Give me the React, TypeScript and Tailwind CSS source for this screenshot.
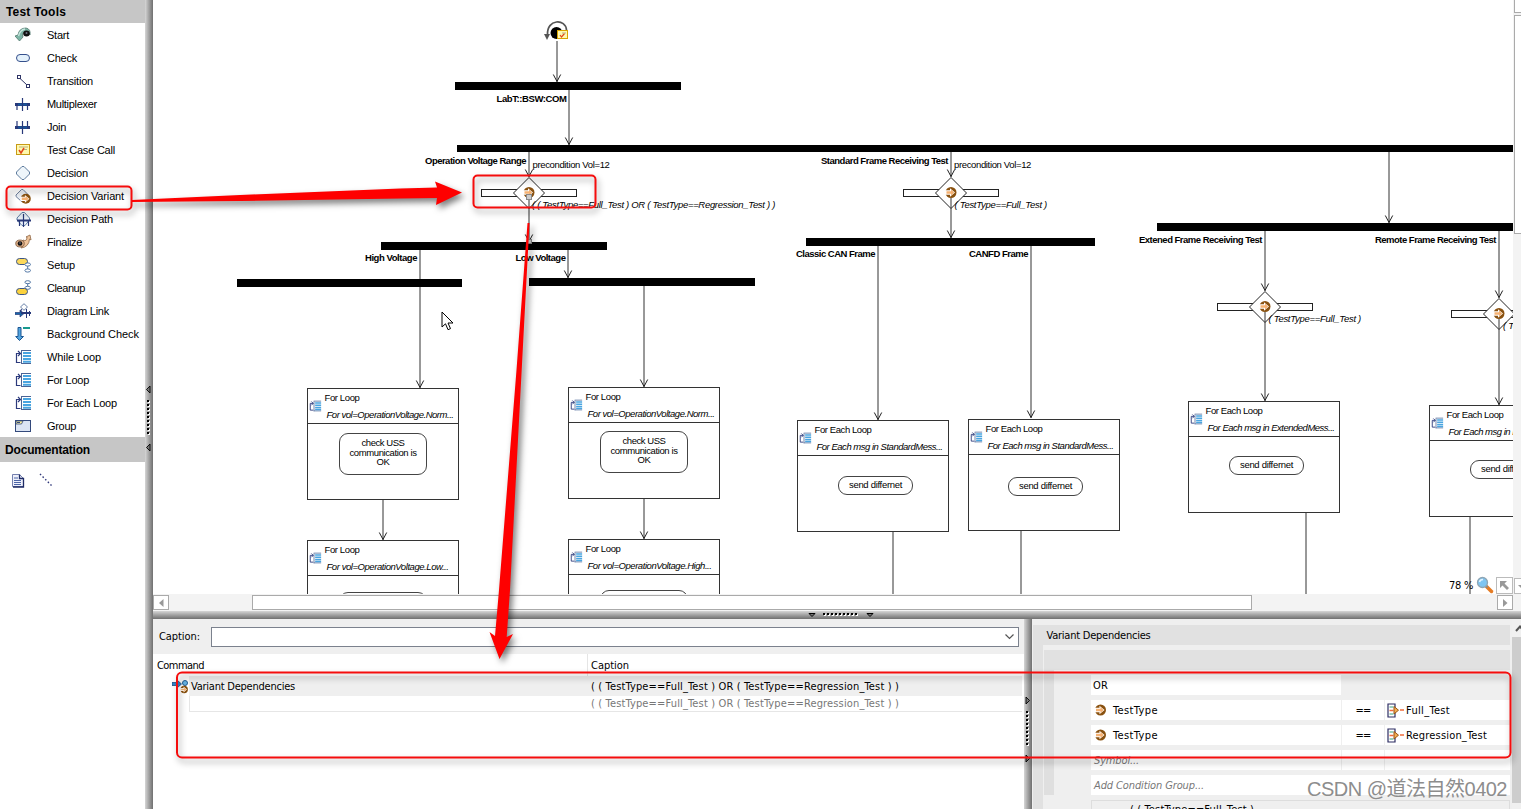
import { useLayoutEffect, useRef, useState } from "react";
import type { ReactNode } from "react";

/* Text whose letter spacing is adjusted so that it fills a given width. */
function Fit({ w, className = "", children }: { w: number; className?: string; children: string }) {
  const ref = useRef<HTMLSpanElement>(null);
  const [spacing, setSpacing] = useState<number | null>(null);
  useLayoutEffect(() => {
    const el = ref.current;
    if (!el || spacing !== null) return;
    const natural = el.getBoundingClientRect().width;
    setSpacing((w - natural) / children.length);
  }, [w, children, spacing]);
  return (
    <span
      ref={ref}
      className={`inline-block whitespace-pre ${className}`}
      style={{ letterSpacing: spacing === null ? "0px" : `${spacing}px` }}
    >
      {children}
    </span>
  );
}

const UI = "font-['DejaVu_Sans_Condensed','Noto_Sans',sans-serif] text-[11px] text-black [&_span]:pt-[2px]";

function Icon({ children }: { children: ReactNode }) {
  return (
    <svg width="17" height="16" viewBox="0 0 17 16" className="shrink-0">
      {children}
    </svg>
  );
}

/* Brown disc with a pale arrow, used for every variant symbol. */
function VariantMark({ cx, cy, r = 5.5 }: { cx: number; cy: number; r?: number }) {
  const k = r / 5.5;
  return (
    <g transform={`translate(${cx} ${cy}) scale(${k})`}>
      <circle r="5.5" fill="#8a5210" />
      <path d="M-6 -2.300H-1V-4.300L4 0L-1 4.300V2.300H-6Z" fill="#fff" />
      <path d="M-4.500 -1.300H0V-3L3.200 0L0 3V1.300H-4.500Z" fill="#f6b273" />
    </g>
  );
}

function LoopGlyph() {
  return (
    <g>
      <path d="M5.500 4.500H1.500V13.500H5.500M3 2L5.500 4.500L3 7" fill="none" stroke="#2c3a7c" strokeWidth="1.200" />
      <path d="M6.500 2V15M6 1.500H16M6 14.500H16" fill="none" stroke="#4a6496" />
      <path d="M8 4H16M8 7H16M8 10H16M8 12.700H16" stroke="#4aa5e0" strokeWidth="2" />
    </g>
  );
}

const glyphs: Record<string, ReactNode> = {
  Start: (
    <g>
      <path d="M0 9L3 8Q4 1 11 1Q16 2 15 8L13 5Q10 3 8 6Q7 8 8 10L4.500 14Z" fill="#7db5a6" stroke="#53786f" strokeWidth=".8" />
      <path d="M3.500 9Q5 3 10 2" fill="none" stroke="#c9e8df" strokeWidth="1.300" />
      <ellipse cx="11.500" cy="6.500" rx="3.300" ry="3" fill="#111" />
      <circle cx="11.500" cy="6" r="1" fill="#778" />
    </g>
  ),
  Check: <rect x="1.500" y="4.500" width="13" height="7" rx="3.500" fill="#e4f1fb" stroke="#35508c" />,
  Transition: (
    <g fill="#fff" stroke="#2f3566">
      <path d="M4 4.500L12 12" />
      <rect x="2.500" y="2.500" width="3" height="3" />
      <rect x="11.500" y="11.500" width="3" height="3" />
    </g>
  ),
  Multiplexer: (
    <g stroke="#28397a" fill="none">
      <path d="M0 8.500H15" strokeWidth="3" />
      <path d="M3 8.500H12" strokeWidth="2" stroke="#17559a" />
      <path d="M7.500 2V15M2 8V14M12.500 8V14" strokeWidth="1.200" />
    </g>
  ),
  Join: (
    <g stroke="#28397a" fill="none">
      <path d="M0 8.500H15" strokeWidth="3" />
      <path d="M3 8.500H12" strokeWidth="2" stroke="#17559a" />
      <path d="M7.500 2V15M2 2V8M12.500 2V8" strokeWidth="1.200" />
    </g>
  ),
  "Test Case Call": (
    <g>
      <rect x="1.500" y="2.500" width="13" height="10" fill="#fff9ae" stroke="#c79b16" />
      <path d="M4 5H13M8 7.500H12" stroke="#b9b184" />
      <path d="M4 8L6 11L9 6" fill="none" stroke="#e2461b" strokeWidth="1.500" />
    </g>
  ),
  Decision: <path d="M7 1.500H9L14.500 7V9L9 14.500H7L1.500 9V7Z" fill="#eef5fa" stroke="#5d7a9c" />,
  "Decision Variant": (
    <g>
      <path d="M6.500 1.500H8L13.500 7V9L8 13.500H6.500L1 8.500V7Z" fill="#e9eef4" stroke="#6d7f9c" />
      <VariantMark cx={10.8} cy={10.8} r={5} />
    </g>
  ),
  "Decision Path": (
    <g fill="none">
      <path d="M7 1.500H9.500L14.500 7V9L10 14.500H7L2 9V7Z" fill="#edf4fb" stroke="#5c7fa8" />
      <path d="M2 9.500H16" stroke="#28397a" strokeWidth="2" />
      <path d="M8.500 3V16M4.500 9V15M13.500 9V15" stroke="#28397a" strokeWidth="1.200" />
    </g>
  ),
  Finalize: (
    <g>
      <path d="M8 6Q12 8 12 3L11 3L15 1L16 6L14.500 5Q14 13 6 14Q8 11 8 6Z" fill="#f0c49b" stroke="#9a7351" strokeWidth=".9" />
      <ellipse cx="5" cy="9.500" rx="4.300" ry="3.500" fill="#d8a982" stroke="#705036" strokeWidth=".7" />
      <circle cx="5" cy="9.500" r="2.300" fill="#111" />
      <circle cx="5" cy="9" r=".7" fill="#99a" />
    </g>
  ),
  Setup: (
    <g>
      <rect x="1.500" y="1.500" width="11" height="6" rx="3" fill="#fbd85a" stroke="#3c5586" />
      <ellipse cx="12.700" cy="7.500" rx="2.800" ry="1.600" fill="#fff" stroke="#5277a5" />
      <path d="M12.700 9V12" stroke="#5277a5" />
      <ellipse cx="12.700" cy="13.500" rx="2.800" ry="1.600" fill="#fff" stroke="#5277a5" />
    </g>
  ),
  Cleanup: (
    <g>
      <ellipse cx="12.700" cy="2.200" rx="2.800" ry="1.500" fill="#fff" stroke="#5277a5" />
      <path d="M12.700 3.500V6.500" stroke="#5277a5" />
      <ellipse cx="12.700" cy="7.800" rx="2.800" ry="1.500" fill="#fff" stroke="#5277a5" />
      <rect x="1.500" y="8.500" width="11" height="6" rx="3" fill="#fbd23d" stroke="#3c5586" />
    </g>
  ),
  "Diagram Link": (
    <g fill="none">
      <path d="M9 .7L12.500 4L9 7.300L5.500 4Z" fill="#fff" stroke="#6a82a8" />
      <path d="M0 9.500H5V7L9 10.500L5 14V11.500H0Z" fill="#1767a8" stroke="#28397a" strokeWidth=".7" />
      <path d="M6 10H16" stroke="#28397a" strokeWidth="2" />
      <path d="M6.500 6L5.500 9M11.500 6V15M14.500 8V13" stroke="#28397a" />
    </g>
  ),
  "Background Check": (
    <g>
      <path d="M3 1.500H6V10.500H8.500L4.500 14.500L.7 10.500H3Z" fill="#55a6df" stroke="#1a5592" />
      <path d="M8 2H15" stroke="#18998e" strokeWidth="2" />
    </g>
  ),
  "While Loop": <LoopGlyph />,
  "For Loop": <LoopGlyph />,
  "For Each Loop": <LoopGlyph />,
  Group: (
    <g>
      <rect x=".5" y="2.500" width="15" height="11" fill="#dce5f4" stroke="#33497b" />
      <path d="M1 3H8L6.500 6H1Z" fill="#fff29c" stroke="#33497b" strokeWidth=".8" />
      <path d="M2 4.500H5" stroke="#33497b" />
    </g>
  ),
};

const tools: [string, number][] = [
  ["Start", 22], ["Check", 30], ["Transition", 46], ["Multiplexer", 50], ["Join", 19],
  ["Test Case Call", 68], ["Decision", 41], ["Decision Variant", 77], ["Decision Path", 66],
  ["Finalize", 35], ["Setup", 28], ["Cleanup", 38], ["Diagram Link", 62],
  ["Background Check", 92], ["While Loop", 54], ["For Loop", 42], ["For Each Loop", 70], ["Group", 29],
];

function Sidebar() {
  return (
    <aside className="flex w-[145px] shrink-0 flex-col bg-white font-['Liberation_Sans',Arial,sans-serif] text-[11px] text-black">
      <div className="flex h-[23px] items-center bg-[#c6c6c6] pl-[6px] text-[12px] font-bold">
        <Fit w={60}>Test Tools</Fit>
      </div>
      {tools.map(([name, w]) => (
        <div key={name} className="flex h-[23px] items-center pl-[15px]">
          <Icon>{glyphs[name]}</Icon>
          <Fit w={w} className="ml-[15px] pt-[2px]">{name}</Fit>
        </div>
      ))}
      <div className="flex h-[25px] items-center bg-[#c6c6c6] pl-[5px] text-[12px] font-bold">
        <Fit w={85}>Documentation</Fit>
      </div>
      <div className="flex items-start gap-[11px] pt-[11px] pl-[11px]">
        <svg width="16" height="16">
          <path d="M1.500 1.500H8.500L12.500 5.500V13.500H1.500Z" fill="#eef0fb" stroke="#7480ae" />
          <path d="M8.500 1.500V5.500H12.500V14H2" fill="none" stroke="#1e2b66" strokeWidth="1.300" />
          <path d="M3 5H7M3 7.500H10M3 9.500H10M3 11.500H10" stroke="#4d66a8" />
        </svg>
        <svg width="18" height="16">
          <path d="M2 1L15 14" stroke="#30387a" strokeWidth="1.400" strokeDasharray="1.5 2.200" />
        </svg>
      </div>
    </aside>
  );
}

/* Grip of a splitter: nine dots between two small triangles. */
function Grip({ dir }: { dir: "left" | "right" | "down" }) {
  const tri =
    dir === "left" ? "M5 1L1.500 4.500L5 8Z" : dir === "right" ? "M2 1L5.500 4.500L2 8Z" : "M2 2.500H8L5 5.500Z";
  const dots = Array.from({ length: 9 }, (_, i) => i);
  if (dir === "down") {
    return (
      <svg width="68" height="8" className="block">
        <path d={tri} fill="#777" stroke="#000" />
        {dots.map((i) => (
          <g key={i}>
            <rect x={17 + i * 4} y="3" width="2" height="2" fill="#fff" />
            <rect x={16 + i * 4} y="2" width="2" height="2" fill="#000" />
          </g>
        ))}
        <path d={tri} transform="translate(58 0)" fill="#777" stroke="#000" />
      </svg>
    );
  }
  return (
    <svg width="8" height="67" className="block">
      <path d={tri} fill="#777" stroke="#000" strokeWidth=".9" />
      {dots.map((i) => (
        <g key={i}>
          <rect x="3" y={16 + i * 4} width="2" height="2" fill="#fff" />
          <rect x="2" y={15 + i * 4} width="2" height="2" fill="#000" />
        </g>
      ))}
      <path d={tri} transform="translate(0 58)" fill="#777" stroke="#000" strokeWidth=".9" />
    </svg>
  );
}

/* ---------- diagram ---------- */

const bars = [
  [455, 82, 226, 8], [457, 145, 1060, 7], [381, 242, 226, 8], [237, 279, 225, 8],
  [529, 278, 226, 8], [806, 238, 289, 8], [1157, 223, 360, 8],
];

/* x, start y, end y, ends in an arrow head */
const links: [number, number, number, boolean][] = [
  [557, 41, 82, true], [569, 90, 145, true], [529, 152, 177, true], [951, 152, 177, true],
  [420, 250, 388, true], [568, 250, 278, true], [644, 286, 387, true],
  [878, 246, 420, true], [1031, 246, 418, true], [1389, 152, 223, true],
  [1265, 231, 291, true], [1499, 231, 298, true],
  [383, 500, 540, true], [644, 499, 539, true],
  [893, 532, 594, false], [1021, 531, 594, false], [1306, 513, 594, false], [1470, 517, 594, false],
];

const exits: [number, number, number][] = [
  [529, 198, 242], [951, 198, 238], [1265, 312, 401], [1499, 319, 405],
];

const decisions = [[529, 193], [951, 193], [1265, 307], [1499, 314]];

function Arrow({ x, y }: { x: number; y: number }) {
  return <path d={`M${x - 3.7} ${y - 7.5}L${x} ${y - 0.5}L${x + 3.7} ${y - 7.5}`} fill="none" stroke="#222" />;
}

function Wires() {
  return (
    <svg width="1360" height="594" viewBox="153 0 1360 594" className="absolute top-0 left-0">
      {links.map(([x, a, b, head]) => (
        <g key={`${x}-${a}`}>
          <path d={`M${x} ${a}V${b}`} stroke="#333" />
          {head && <Arrow x={x} y={b} />}
        </g>
      ))}
      {bars.map(([x, y, w, h]) => (
        <rect key={`${x}-${y}`} x={x} y={y} width={w} height={h} fill="#000" />
      ))}
      {decisions.map(([x, y]) => (
        <g key={x}>
          <rect x={x - 47.5} y={y - 3.5} width="95" height="7" fill="#fff" stroke="#222" />
          <path d={`M${x} ${y - 15.5}L${x + 15.5} ${y}L${x} ${y + 15.5}L${x - 15.5} ${y}Z`} fill="#fff" stroke="#222" />
          <VariantMark cx={x} cy={y - 0.5} />
        </g>
      ))}
      {exits.map(([x, a, b]) => (
        <g key={x}>
          <path d={`M${x} ${a}V${b}`} stroke="#333" />
          <Arrow x={x} y={b} />
        </g>
      ))}
      <rect x="526.500" y="194.500" width="5" height="5" fill="#ccc" stroke="#888" />
      <rect x="527.500" y="239.500" width="4" height="4" fill="#ccc" stroke="#888" />
      <circle cx="556.500" cy="33" r="6" fill="#000" />
      <path d="M547.500 35C546.500 18.500 566 18.500 566.500 30" fill="none" stroke="#555" strokeWidth="1.700" />
      <path d="M544 34H550L547 40Z" fill="#555" />
      <rect x="557.500" y="30.500" width="10" height="8" fill="#fff9b0" stroke="#d9a400" />
      <path d="M560 35L561.500 37L564.500 33.500" fill="none" stroke="#e2461b" strokeWidth="1.200" />
      <path d="M562 33H566" stroke="#b9b184" />
    </svg>
  );
}

const labels: [string, number, number, number, string][] = [
  ["LabT::BSW:COM", 496.5, 99, 70, "font-bold"],
  ["Operation Voltage Range", 425, 161, 101, "font-bold"],
  ["Standard Frame Receiving Test", 821, 161, 127, "font-bold"],
  ["High Voltage", 365, 258, 52, "font-bold"],
  ["Low Voltage", 515.5, 258, 50, "font-bold"],
  ["Classic CAN Frame", 796, 254, 79, "font-bold"],
  ["CANFD Frame", 969, 254, 59, "font-bold"],
  ["Extened Frame Receiving Test", 1139, 240, 123, "font-bold"],
  ["Remote Frame Receiving Test", 1375, 240, 121, "font-bold"],
  ["precondition Vol=12", 532.5, 165, 77, ""],
  ["precondition Vol=12", 954, 165, 77, ""],
  ["( ( TestType==Full_Test ) OR ( TestType==Regression_Test ) )", 532, 205, 243, "italic"],
  ["( TestType==Full_Test )", 954.5, 205, 92.5, "italic"],
  ["( TestType==Full_Test )", 1268.5, 319, 92.5, "italic"],
  ["( TestType==Full_Test )", 1503, 326, 92.5, "italic"],
];

type Loop = {
  x: number; y: number; title: string; tw: number; detail: string; dw: number;
  pill: "check" | "send" | "clipped"; px: number; py: number;
};

const loops: Loop[] = [
  { x: 307, y: 388, title: "For Loop", tw: 35, detail: "For vol=OperationVoltage.Norm...", dw: 127, pill: "check", px: 32, py: 44 },
  { x: 568, y: 387, title: "For Loop", tw: 35, detail: "For vol=OperationVoltage.Norm...", dw: 127, pill: "check", px: 32, py: 43 },
  { x: 307, y: 540, title: "For Loop", tw: 35, detail: "For vol=OperationVoltage.Low...", dw: 122, pill: "clipped", px: 32, py: 51 },
  { x: 568, y: 539, title: "For Loop", tw: 35, detail: "For vol=OperationVoltage.High...", dw: 124, pill: "clipped", px: 32, py: 50 },
  { x: 797, y: 420, title: "For Each Loop", tw: 57, detail: "For Each msg in StandardMess...", dw: 126, pill: "send", px: 40, py: 55 },
  { x: 968, y: 419, title: "For Each Loop", tw: 57, detail: "For Each msg in StandardMess...", dw: 126, pill: "send", px: 39, py: 57 },
  { x: 1188, y: 401, title: "For Each Loop", tw: 57, detail: "For Each msg in ExtendedMess...", dw: 127, pill: "send", px: 40, py: 54 },
  { x: 1429, y: 405, title: "For Each Loop", tw: 57, detail: "For Each msg in RemoteMess...", dw: 121, pill: "send", px: 40, py: 54 },
];

function LoopNode({ n }: { n: Loop }) {
  return (
    <div
      className="absolute flex h-[112px] w-[152px] flex-col border border-[#333] bg-white"
      style={{ left: n.x - 153, top: n.y }}
    >
      <div className="flex h-[35px] shrink-0 border-b border-[#333]">
        <svg width="13" height="12" viewBox="0 0 17 16" className="mt-[11px] ml-px shrink-0">
          <LoopGlyph />
        </svg>
        <div className="ml-[2.5px] flex flex-col items-start leading-[17px]">
          <Fit w={n.tw}>{n.title}</Fit>
          <Fit w={n.dw} className="ml-[2px] italic">{n.detail}</Fit>
        </div>
      </div>
      {n.pill !== "send" ? (
        <div
          className="absolute flex h-[42px] w-[88px] flex-col items-center rounded-[9px] border border-[#444] bg-white pt-[4px] leading-[9.5px]"
          style={{ left: n.px - 1, top: n.py }}
        >
          {n.pill === "check" && (
            <>
              <Fit w={43}>check USS</Fit>
              <Fit w={67}>communication is</Fit>
              <Fit w={13}>OK</Fit>
            </>
          )}
        </div>
      ) : (
        <div
          className="absolute flex h-[19px] w-[75px] items-center justify-center rounded-[9px] border border-[#444] bg-white"
          style={{ left: n.px, top: n.py }}
        >
          <Fit w={53}>send differnet</Fit>
        </div>
      )}
    </div>
  );
}

function Diagram() {
  return (
    <div className="relative h-[594px] w-[1360px] shrink-0 overflow-hidden bg-white font-['Liberation_Sans',Arial,sans-serif] text-[9.5px] text-black">
      <Wires />
      {loops.map((n) => (
        <LoopNode key={`${n.x}-${n.y}`} n={n} />
      ))}
      {labels.map(([t, x, y, w, c]) => (
        <div key={`${t}-${x}`} className="absolute h-[12px] leading-[12px]" style={{ left: x - 153, top: y - 6 }}>
          <Fit w={w} className={c}>{t}</Fit>
        </div>
      ))}
      <svg width="14" height="21" className="absolute top-[311px] left-[288px]">
        <path d="M1 1V16L4.500 12.800L7 18.700L9.500 17.600L7 12H12Z" fill="#fff" stroke="#000" />
      </svg>
      <div className={`absolute top-[576px] left-[1296px] flex h-[18px] items-center ${UI}`}>
        <Fit w={24}>78 %</Fit>
        <svg width="18" height="18" className="ml-[3px]">
          <path d="M10.500 10.500L15.500 15.500" stroke="#e57c25" strokeWidth="3.500" strokeLinecap="round" />
          <path d="M9.500 9.500L11.500 11.500" stroke="#888" strokeWidth="2" />
          <circle cx="6.500" cy="6.500" r="5" fill="#7fc5f2" stroke="#8fa6b5" strokeWidth="1.300" />
          <path d="M3.500 6Q4 3.500 7 3.500" stroke="#e5f5ff" strokeWidth="1.500" fill="none" />
        </svg>
        <div className="ml-[2px] flex size-[17px] items-center justify-center border border-[#bbb] bg-white">
          <svg width="9" height="9">
            <path d="M0 0H7L4.500 2.500L9 7L7 9L2.500 4.500L0 7Z" fill="#999" />
          </svg>
        </div>
      </div>
    </div>
  );
}

/* ---------- lower panels ---------- */

function CommandPane() {
  const expr = "( ( TestType==Full_Test ) OR ( TestType==Regression_Test ) )";
  return (
    <section className={`flex w-[871px] shrink-0 flex-col bg-white ${UI}`}>
      <div className="flex h-[35px] shrink-0 items-center bg-[#efefef] pl-[6px]">
        <Fit w={41}>Caption:</Fit>
        <div className="ml-[11px] flex h-[20px] w-[808px] items-center justify-end border border-[#7b818d] bg-white pr-[4px]">
          <svg width="9" height="6">
            <path d="M.5 .5L4.500 4.500L8.500 .5" fill="none" stroke="#555" strokeWidth="1.200" />
          </svg>
        </div>
      </div>
      <div className="flex h-[22px] shrink-0 items-center">
        <div className="w-[434px] pl-[4px]"><Fit w={47}>Command</Fit></div>
        <div className="flex h-full flex-1 items-center border-l border-[#e5e5e5] pl-[3px]"><Fit w={38}>Caption</Fit></div>
      </div>
      <div className="flex shrink-0">
        <div className="flex w-[36px] justify-end pt-[3px]">
          <svg width="17" height="16">
            <path d="M0 3.500H5V1L9.500 5L5 9V6.500H0Z" fill="#3187cc" stroke="#1b4d83" strokeWidth=".8" />
            <circle cx="13" cy="4" r="2.500" fill="#68b5e6" stroke="#245d92" />
            <VariantMark cx={12.2} cy={10.5} r={3.7} />
          </svg>
        </div>
        <div className="flex w-[833px] flex-col">
          <div className="flex h-[20px] items-center bg-[#efefef]">
            <div className="w-[402px] pl-[2px]"><Fit w={104}>Variant Dependencies</Fit></div>
            <Fit w={308}>{expr}</Fit>
          </div>
          <div className="flex h-[16px] items-center border-b border-l border-[#e6e6e6] pl-[401px] text-[#777]">
            <Fit w={308}>{expr}</Fit>
          </div>
        </div>
      </div>
    </section>
  );
}

function Operand({ name, w, value, vw }: { name: string; w: number; value: string; vw: number }) {
  return (
    <div className="flex h-[20px] gap-px">
      <div className="flex w-[250px] items-center bg-white pl-[4px]">
        <svg width="12" height="12"><VariantMark cx={5.500} cy={6} /></svg>
        <Fit w={w} className="ml-[6px]">{name}</Fit>
      </div>
      <div className="flex w-[42px] items-center justify-center bg-white"><Fit w={15}>==</Fit></div>
      <div className="flex flex-1 items-center bg-white pl-[2px]">
        <svg width="17" height="15">
          <path d="M1 1H8V14H1Z" fill="#fff" stroke="#2d2d63" strokeWidth="1.200" />
          <path d="M2.500 4H6.500M2.500 11H6.500" stroke="#9ad0bd" strokeWidth="2" />
          <path d="M2.500 7.500H6.500M13 7H17" stroke="#ef6c3b" strokeWidth="1.700" />
          <path d="M7 3.500L11.500 7.200L7 11Z" fill="#f2ad50" stroke="#995615" />
        </svg>
        <Fit w={vw} className="ml-[2px]">{value}</Fit>
      </div>
    </div>
  );
}

function VariantPane() {
  return (
    <section className={`flex min-w-0 flex-1 overflow-hidden bg-[#efefef] ${UI}`}>
      <div className="flex w-[478px] shrink-0 flex-col pt-[6px] pl-px">
        <div className="flex h-[20px] shrink-0 items-center bg-[#e1e1e1] pl-[13.5px]"><Fit w={104}>Variant Dependencies</Fit></div>
        <div className="flex">
          <div className="h-[164px] w-[10px] shrink-0 bg-[#e1e1e1]" />
          <div className="ml-px flex flex-1 flex-col pt-[5px]">
            <div className="h-[20px] bg-[#e1e1e1]" />
            <div className="flex">
              <div className="h-[125px] w-[10px] shrink-0 bg-[#dfdfdf]" />
              <div className="ml-[37px] flex flex-1 flex-col gap-[5px] pt-[5px]">
                <div className="flex h-[20px] w-[250px] items-center bg-white pl-[2px]"><Fit w={15}>OR</Fit></div>
                <Operand name="TestType" w={45} value="Full_Test" vw={44} />
                <Operand name="TestType" w={45} value="Regression_Test" vw={81} />
                <div className="flex h-[20px] gap-px">
                  <div className="flex w-[250px] items-center bg-white pl-[3px] text-[#777] italic"><Fit w={45}>Symbol...</Fit></div>
                  <div className="w-[42px] bg-white" />
                  <div className="flex-1 bg-white" />
                </div>
                <div className="flex h-[20px] items-center bg-white pl-[3px] text-[#777] italic"><Fit w={110}>Add Condition Group...</Fit></div>
                <div className="flex h-[20px] shrink-0 border border-[#ddd] pl-[38px] leading-[14px]"><Fit w={124}>{"( ( TestType==Full_Test )"}</Fit></div>
              </div>
            </div>
          </div>
        </div>
      </div>
      <div className="ml-[2px] flex w-[9px] flex-col bg-[#f0f0f0]">
        <svg width="9" height="18">
          <path d="M4 12L8 7.500L12 12" fill="none" stroke="#555" strokeWidth="2" />
        </svg>
        <div className="h-[166px] bg-[#cdcdcd]" />
      </div>
    </section>
  );
}

/* Red marker frames and arrows drawn over the whole window. */
function Annotations() {
  return (
    <svg width="1521" height="809" className="pointer-events-none absolute top-0 left-0">
      <g className="drop-shadow-[2px_4px_3px_rgba(0,0,0,0.4)]" fill="none" stroke="#f50d0d" strokeWidth="2">
        <rect x="6.500" y="186.500" width="125" height="23" rx="4" />
        <rect x="473.500" y="175.500" width="122" height="32" rx="4" />
        <rect x="177" y="672.500" width="1333.500" height="85" rx="5" />
      </g>
      <g className="drop-shadow-[3px_4px_3px_rgba(0,0,0,0.5)]" fill="#fe0000">
        <path d="M132 200L240 195L400 188.500L437 187.500L435 181.500L462 192.500L436 205L437 198L400 198.500L240 201L132 202Z" />
        <path d="M527.500 223H529.500L521.700 370L510 590L506.700 637L513 634L499.500 659L489.500 632L495 636L499 590L516.500 370Z" />
      </g>
    </svg>
  );
}

export default function App() {
  return (
    <div className="relative flex h-[809px] w-[1521px] overflow-hidden bg-white">
      <Sidebar />
      <div className="w-[8px] shrink-0 bg-linear-to-r from-[#d6d6d6] to-[#707070] pt-[385px]">
        <Grip dir="left" />
      </div>
      <main className="flex w-[1368px] shrink-0 flex-col">
        <div className="flex">
          <Diagram />
          <div className="flex h-[594px] w-[8px] flex-col overflow-hidden bg-[#f3f3f3] pl-px">
            <div className="h-[13px] w-[16px] shrink-0 border border-t-0 border-[#aaa] bg-white" />
            <div className="mt-[2px] h-[219px] w-[16px] shrink-0 border border-[#aaa] bg-white" />
            <div className="mt-auto h-[16px] w-[16px] shrink-0 border border-[#bbb] bg-white pt-[6px] pl-[3px]">
              <svg width="9" height="5"><path d="M0 0H8L4 4Z" fill="#999" /></svg>
            </div>
          </div>
        </div>
        <div className="flex h-[17px] shrink-0 bg-[#f3f3f3] pt-px">
          <div className="flex h-[15px] w-[16px] items-center justify-center border border-[#aaa] bg-white">
            <svg width="5" height="8"><path d="M4.500 0V8L0 4Z" fill="#999" /></svg>
          </div>
          <div className="ml-[83px] h-[15px] w-[1000px] border border-[#aaa] bg-white" />
          <div className="ml-[245px] flex h-[15px] w-[16px] items-center justify-center border border-[#aaa] bg-white">
            <svg width="5" height="8"><path d="M0 0V8L4.500 4Z" fill="#999" /></svg>
          </div>
        </div>
        <div className="h-[8px] shrink-0 bg-linear-to-b from-[#d6d6d6] to-[#707070] pl-[654px]">
          <Grip dir="down" />
        </div>
        <div className="flex h-[190px] shrink-0">
          <CommandPane />
          <div className="w-[8px] shrink-0 bg-linear-to-r from-[#d6d6d6] to-[#707070] pt-[77px]">
            <Grip dir="right" />
          </div>
          <VariantPane />
        </div>
      </main>
      <Annotations />
      <div className="absolute top-[775px] left-[1307px] font-['Liberation_Sans','Noto_Sans_CJK_SC',sans-serif] text-[20px] leading-[28px] text-[#8d8d8d]">
        <Fit w={200}>CSDN @道法自然0402</Fit>
      </div>
    </div>
  );
}
